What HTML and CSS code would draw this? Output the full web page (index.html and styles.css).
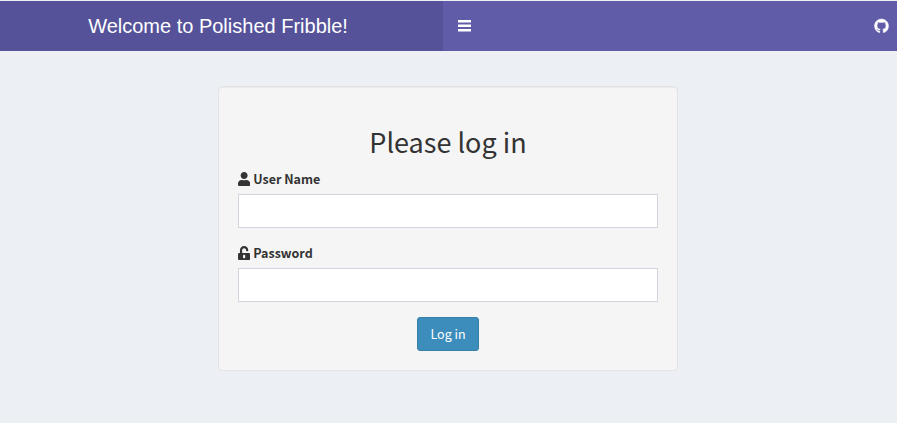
FILE: index.html
```html
<!DOCTYPE html>
<html lang="en">
<head>
<meta charset="utf-8">
<title>Polished Fribble</title>
<link rel="stylesheet" href="styles.css">
</head>
<body>
<header class="header">
  <div class="logo">Welcome to Polished Fribble!</div>
  <nav class="navbar">
    <svg class="bars" viewBox="0 0 13 12"><path d="M0 0h13v2.500H0zM0 4.500h13V7H0zM0 9h13v2.500H0z"/></svg>
    <svg class="github" viewBox="0 0 16 16"><path d="M8 0C3.580 0 0 3.580 0 8c0 3.540 2.290 6.530 5.470 7.590.4.070.55-.17.55-.38 0-.19-.01-.82-.01-1.490-2.010.37-2.530-.49-2.690-.94-.09-.23-.48-.94-.82-1.130-.28-.15-.68-.52-.01-.53.63-.01 1.080.58 1.230.82.72 1.210 1.870.87 2.330.66.07-.52.28-.87.51-1.070-1.780-.2-3.640-.89-3.640-3.950 0-.87.31-1.590.82-2.150-.08-.2-.36-1.020.08-2.120 0 0 .67-.21 2.200.82.64-.18 1.320-.27 2-.27s1.360.09 2 .27c1.530-1.040 2.200-.82 2.200-.82.44 1.100.16 1.920.08 2.120.51.56.82 1.270.82 2.150 0 3.070-1.870 3.750-3.650 3.950.29.25.54.73.54 1.480 0 1.070-.01 1.930-.01 2.200 0 .21.15.46.55.38A8.010 8.010 0 0 0 16 8c0-4.420-3.580-8-8-8z"/></svg>
  </nav>
</header>
<main class="content">
  <form class="panel">
    <h2 class="title">Please log in</h2>
    <div class="group">
      <label class="label" for="user"><svg class="icon" viewBox="0 0 448 512"><path d="M224 256c70.700 0 128-57.300 128-128S294.700 0 224 0 96 57.300 96 128s57.300 128 128 128zm89.600 32h-16.700c-22.200 10.200-46.900 16-72.900 16s-50.600-5.800-72.900-16h-16.700C60.200 288 0 348.200 0 422.400V464c0 26.500 21.500 48 48 48h352c26.500 0 48-21.500 48-48v-41.600c0-74.200-60.200-134.400-134.400-134.400z"/></svg><span>User Name</span></label>
      <input class="input" id="user" type="text">
    </div>
    <div class="group">
      <label class="label" for="pass"><svg class="icon" viewBox="0 0 448 512"><path d="M400 256H152V152.900c0-39.600 31.700-72.500 71.300-72.900 40-.4 72.700 32.100 72.700 72v16c0 13.300 10.700 24 24 24h32c13.300 0 24-10.700 24-24v-16C376 68 307.500-.3 223.500 0 139.500.3 72 69.500 72 153.500V256H48c-26.500 0-48 21.500-48 48v160c0 26.500 21.500 48 48 48h352c26.500 0 48-21.500 48-48V304c0-26.500-21.500-48-48-48zM264 408c0 22.100-17.900 40-40 40s-40-17.900-40-40v-48c0-22.100 17.900-40 40-40s40 17.900 40 40v48z"/></svg><span>Password</span></label>
      <input class="input" id="pass" type="password">
    </div>
    <button class="button" type="button">Log in</button>
  </form>
</main>
</body>
</html>
```
FILE: styles.css
```css
* { box-sizing: border-box; }
body {
  margin: 0;
  padding-top: 1px;
  height: 423px;
  overflow: hidden;
  background: #ecf0f5;
  color: #333;
  font-family: "Noto Sans CJK SC", sans-serif;
}
.header { display: flex; height: 50px; }
.logo {
  width: 443px;
  padding-right: 7px;
  background: #555299;
  color: #fff;
  font: 20px/50px "Liberation Sans", sans-serif;
  text-align: center;
}
.navbar {
  flex: 1;
  display: flex;
  align-items: center;
  justify-content: space-between;
  padding: 0 8px 0 15px;
  background: #605ca8;
  fill: #fff;
}
.bars { width: 13px; height: 12px; }
.github { width: 15px; height: 14px; stroke: #fff; stroke-width: .5; overflow: visible; }
.content { padding-top: 35px; }
.panel {
  width: 460px;
  height: 285px;
  margin: 0 0 0 218px;
  padding: 38px 19px 19px;
  background: #f5f5f5;
  border: 1px solid #e3e3e3;
  border-radius: 4px;
  box-shadow: inset 0 1px 1px rgba(0, 0, 0, .05);
}
.title {
  margin: 0 0 11px;
  font-size: 27px;
  font-weight: 400;
  line-height: 33px;
  text-align: center;
}
.group { margin-bottom: 15px; }
.label {
  display: flex;
  align-items: center;
  gap: 3px;
  height: 20px;
  margin-bottom: 5px;
  font-size: 12.5px;
  font-weight: 700;
  line-height: 20px;
}
.icon { width: 12.250px; height: 14px; fill: #333; }
.input {
  display: block;
  width: 100%;
  height: 34px;
  padding: 6px 12px;
  border: 1px solid #d2d6de;
  border-radius: 0;
  background: #fff;
}
.button {
  display: block;
  width: 62px;
  height: 34px;
  margin: 0 auto;
  padding: 0;
  border: 1px solid #367fa9;
  border-radius: 3px;
  background: #3c8dbc;
  color: #fff;
  font: 12.5px/20px "Noto Sans CJK SC", sans-serif;
}
```
